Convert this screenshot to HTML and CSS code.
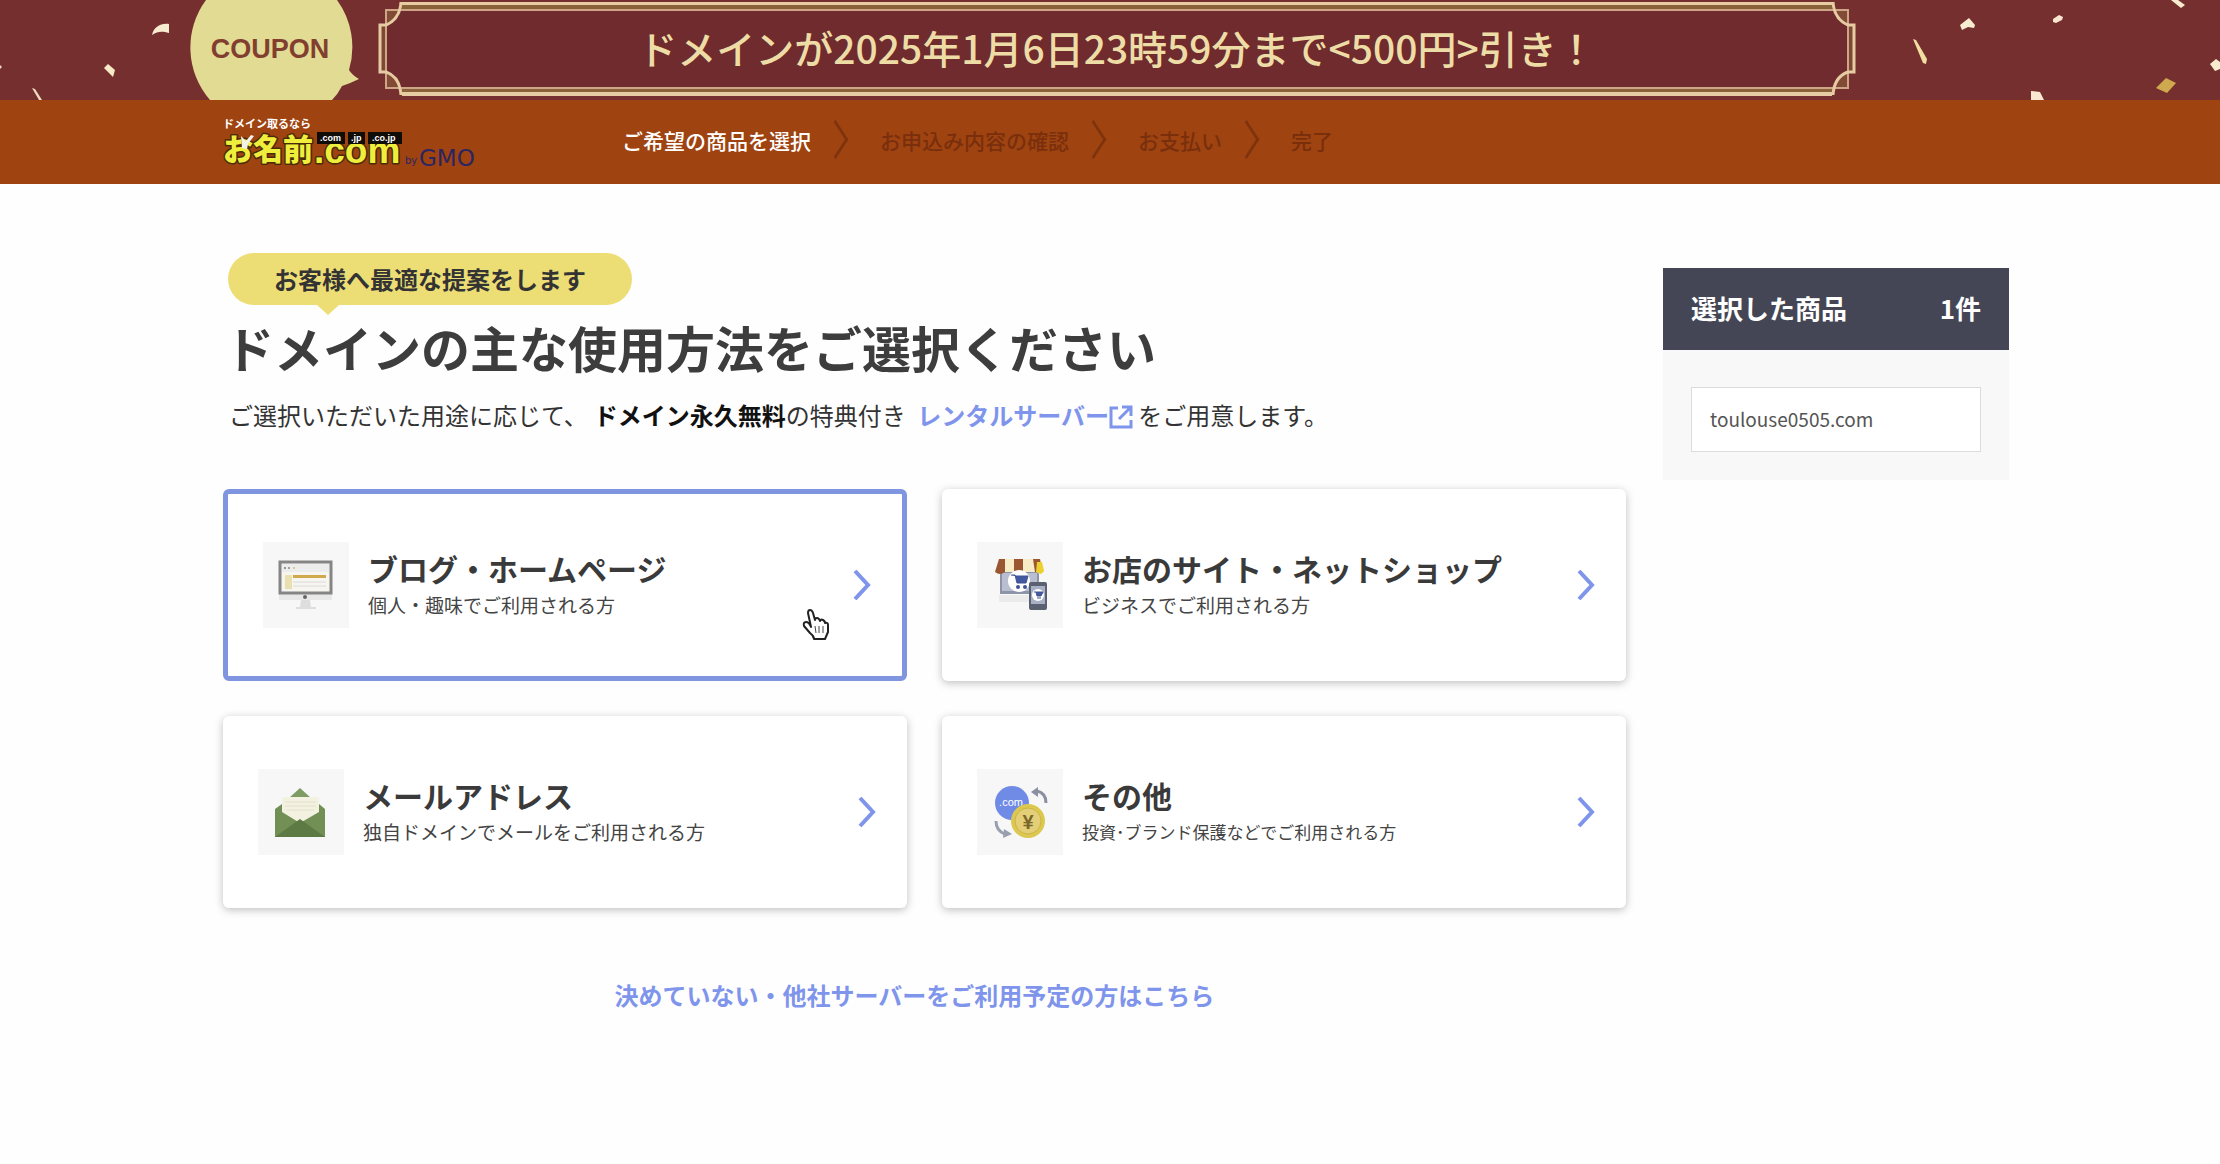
FILE: index.html
```html
<!DOCTYPE html>
<html lang="ja">
<head>
<meta charset="utf-8">
<meta name="viewport" content="width=device-width, initial-scale=1">
<title>お名前.com</title>
<link rel="stylesheet" href="styles.css">
</head>
<body>
<div class="banner">
  <svg class="confetti confetti-left" width="190" height="100" viewBox="0 0 190 100" aria-hidden="true">
    <path d="M152 35c2-8 8-12 17-11v9c-7-2-11-2-17 2z" fill="#f8ecd0"/>
    <path d="M104 68l4-4 7 6-2 7z" fill="#f6eac8"/>
    <path d="M32 88l3 1 7 11h-3z" fill="#efdcc0"/>
    <path d="M0 65l2 2-2 2z" fill="#efdcc0"/>
  </svg>
  <svg class="confetti confetti-right" width="330" height="100" viewBox="0 0 330 100" aria-hidden="true">
    <path d="M70 25l9-7 6 7-1 3-6-1-6 3z" fill="#f8ecd0"/>
    <path d="M163 19l6-4 4 2-1 3-6 3-3-1z" fill="#f8e6d0"/>
    <path d="M281 0h7l7 5-4 3z" fill="#f8ecd0"/>
    <path d="M23 39l3 1 11 19-1 5-3-1z" fill="#f0dfa0"/>
    <path d="M320 64l6-5 4 3v7l-5 2z" fill="#f8ecd0"/>
    <path d="M276 78l10 5-9 10-11-5z" fill="#cfa94e"/>
    <path d="M141 91l9 1 4 8h-13z" fill="#f8e8d2"/>
  </svg>
  <div class="coupon">
    <svg class="coupon-bubble" width="170" height="100" viewBox="0 0 170 100" aria-hidden="true">
      <path d="M16 0a80 80 0 0 0 4 100h122q6-6 10-14 9-3 17-7-7-4-10-9A80 80 0 0 0 147 0z" fill="#e2db94"/>
    </svg>
    <span class="coupon-text">COUPON</span>
  </div>
  <div class="frame">
    <svg width="24" height="100" viewBox="0 0 24 100" aria-hidden="true">
      <path d="M24 2q-2 17-16 22H1v49h7q14 4 16 22z" fill="#6f2b2d"/>
      <path d="M24 3v6H8v79h16v6q-2-17-16-21H2V24h6Q22 19 24 3z" fill="#8a623a" opacity=".55"/>
      <path d="M24 10H8v78h16" fill="none" stroke="#cfa587" stroke-width="2"/>
      <path d="M23 2q-1 17-15 23H2v47h6q14 5 15 23" fill="none" stroke="#e6cba3" stroke-width="3"/>
    </svg>
    <p class="frame-text">ドメインが2025年1月6日23時59分まで&lt;500円&gt;引き！</p>
    <svg width="24" height="100" viewBox="0 0 24 100" aria-hidden="true">
      <path d="M0 2q2 17 16 22h7v49h-7Q2 77 0 95z" fill="#6f2b2d"/>
      <path d="M0 3v6h16v79H0v6q2-17 16-21h6V24h-6Q2 19 0 3z" fill="#8a623a" opacity=".55"/>
      <path d="M0 10h16v78H0" fill="none" stroke="#cfa587" stroke-width="2"/>
      <path d="M1 2q1 17 15 23h6v47h-6Q2 77 1 95" fill="none" stroke="#e6cba3" stroke-width="3"/>
    </svg>
  </div>
</div>

<header class="header">
  <a class="logo" href="#" aria-label="お名前.com by GMO">
    <svg width="260" height="56" viewBox="0 0 260 56">
      <text x="1" y="14" class="logo-lead">ドメイン取るなら</text>
      <text x="1" y="46" class="logo-name">お名前</text>
      <text x="92" y="49" class="logo-dot">.com</text>
      <path d="M95 18h28v12H95zM126 18h17v12h-17zM146 18h34v12h-34z" fill="#100c08"/>
      <text x="98" y="27" class="logo-tag">.com</text>
      <text x="129" y="27" class="logo-tag">.jp</text>
      <text x="150" y="27" class="logo-tag">.co.jp</text>
      <path d="M19 22l5 5 5-6 3 1-6 8-1 5-5-1z" fill="#f2f2ea"/>
      <text x="183" y="50" class="logo-by">by</text>
      <text x="197" y="52" class="logo-gmo">GMO</text>
    </svg>
  </a>
  <ol class="steps">
    <li class="step step-current">ご希望の商品を選択</li>
    <li class="step">お申込み内容の確認</li>
    <li class="step">お支払い</li>
    <li class="step">完了</li>
  </ol>
</header>

<div class="page">
  <main class="main">
    <p class="badge">お客様へ最適な提案をします</p>
    <h1 class="title">ドメインの主な使用方法をご選択ください</h1>
    <p class="lead">ご選択いただいた用途に応じて、<strong>ドメイン永久無料</strong>の特典付き <a class="lead-link" href="#">レンタルサーバー<svg class="external" width="24" height="24" viewBox="0 0 24 24" aria-hidden="true"><path d="M9 3H2v19h20v-7M13 2h9v9M21 3L10 14" fill="none" stroke="#7f95ec" stroke-width="3"/></svg></a> をご用意します。</p>

    <div class="cards">
      <button class="card card-active" type="button">
        <svg class="card-icon" width="86" height="86" viewBox="0 0 86 86" aria-hidden="true">
          <path d="M16 50h53v8H16z" fill="#e8e8e8"/>
          <path d="M38 58h9l1 7h5v2H33v-2h4z" fill="#dedede"/>
          <rect x="17" y="20" width="51" height="31" fill="#f6f5f0" stroke="#858585" stroke-width="3"/>
          <path d="M19 22h47v8H19z" fill="#ececec"/>
          <circle cx="22" cy="26" r="1" fill="#777"/><circle cx="26" cy="26" r="1" fill="#888"/><circle cx="31" cy="26" r="1" fill="#d8c070"/>
          <path d="M22 33h7v14h-7z" fill="#eadfae"/>
          <path d="M30 33h33v3H30z" fill="#d0a94c"/>
          <path d="M30 40h33M30 44h33" stroke="#dadada"/>
          <circle cx="42" cy="55" r="2" fill="#666"/>
        </svg>
        <span class="card-body">
          <span class="card-title">ブログ・ホームページ</span>
          <span class="card-note">個人・趣味でご利用される方</span>
        </span>
        <svg class="chevron" width="18" height="30" viewBox="0 0 18 30" aria-hidden="true"><path d="M2 1l13 14L2 29"/></svg>
        <svg class="hand" width="28" height="32" viewBox="0 0 28 32" aria-hidden="true">
          <path d="M9 18L6 4q0-3 2-3t3 3l2 7q0-2 2-2t3 3q1-2 3-1t2 3q3-1 3 2v7l-3 7H12q0-3-4-6l-6-7q-1-4 2-4t5 5z" fill="#fff" stroke="#222" stroke-width="2" stroke-linejoin="round"/>
          <path d="M13 17l1 7M17 17v7M21 17v7" stroke="#444" stroke-width="1"/>
        </svg>
      </button>

      <button class="card" type="button">
        <svg class="card-icon" width="86" height="86" viewBox="0 0 86 86" aria-hidden="true">
          <path d="M22 53h30v7H22z" fill="#ebebeb"/>
          <path d="M23 29h39v23H23z" fill="#8d94a8"/>
          <path d="M25 31h35v18H25z" fill="#b9bfd0"/>
          <path d="M22 17h42l3 13q-4 3-7 0H18z" fill="#f8ecc6"/>
          <path d="M22 17h6v13q-5 4-10 0zM37 17h9v13q-5 4-9 0zM56 17h7l2 13h-7z" fill="#9a5630"/>
          <path d="M60 20h5l2 9-3 3-5-2z" fill="#ecd02c"/>
          <circle cx="42" cy="39" r="11" fill="#fff"/>
          <path d="M34 33h4l2 8h9l2-7H38" fill="#4459a0" stroke="#3f5396" stroke-width="1"/>
          <circle cx="41" cy="45" r="2" fill="#3f5396"/><circle cx="48" cy="45" r="2" fill="#3f5396"/>
          <rect x="52" y="40" width="18" height="28" rx="2" fill="#5b6070"/>
          <path d="M54 44h14v18H54z" fill="#a8b0c6"/>
          <circle cx="61" cy="53" r="6" fill="#fff"/>
          <path d="M57 50h2l1 4h4l2-4h-7M60 56h4" fill="#4459a0" stroke="#3f5396"/>
        </svg>
        <span class="card-body">
          <span class="card-title">お店のサイト・ネットショップ</span>
          <span class="card-note">ビジネスでご利用される方</span>
        </span>
        <svg class="chevron" width="18" height="30" viewBox="0 0 18 30" aria-hidden="true"><path d="M2 1l13 14L2 29"/></svg>
      </button>

      <button class="card" type="button">
        <svg class="card-icon" width="86" height="86" viewBox="0 0 86 86" aria-hidden="true">
          <path d="M42 19l11 10H31z" fill="#7f9c65"/>
          <path d="M17 40l7-5h37l6 5v28H17z" fill="#728f56"/>
          <path d="M24 30q0-2 3-2h31q3 0 3 2v13L42 54 24 43z" fill="#f3f1e0"/>
          <path d="M27 33h31M27 37h31M29 41h27" stroke="#e4e0cc"/>
          <path d="M17 68l25-18 25 18z" fill="#5d7a45"/>
        </svg>
        <span class="card-body">
          <span class="card-title">メールアドレス</span>
          <span class="card-note">独自ドメインでメールをご利用される方</span>
        </span>
        <svg class="chevron" width="18" height="30" viewBox="0 0 18 30" aria-hidden="true"><path d="M2 1l13 14L2 29"/></svg>
      </button>

      <button class="card" type="button">
        <svg class="card-icon" width="86" height="86" viewBox="0 0 86 86" aria-hidden="true">
          <circle cx="35" cy="34" r="17" fill="#708be6"/>
          <text x="34" y="37" class="icon-com">.com</text>
          <circle cx="51" cy="52" r="17" fill="#dcc84e"/>
          <circle cx="51" cy="52" r="13" fill="#e4cf78" stroke="#cdb548"/>
          <text x="51" y="60" class="icon-yen">¥</text>
          <path d="M69 34q0-10-9-12" fill="none" stroke="#8a90a0" stroke-width="3"/>
          <path d="M54 23l7-5v10z" fill="#8a90a0"/>
          <path d="M19 52q0 10 9 13" fill="none" stroke="#9a9fae" stroke-width="3"/>
          <path d="M35 65l-8-5-1 9z" fill="#9a9fae"/>
        </svg>
        <span class="card-body">
          <span class="card-title">その他</span>
          <span class="card-note card-note-small">投資･ブランド保護などでご利用される方</span>
        </span>
        <svg class="chevron" width="18" height="30" viewBox="0 0 18 30" aria-hidden="true"><path d="M2 1l13 14L2 29"/></svg>
      </button>
    </div>

    <p class="other"><a class="other-link" href="#">決めていない・他社サーバーをご利用予定の方はこちら</a></p>
  </main>

  <aside class="cart">
    <h2 class="cart-head"><span>選択した商品</span><span>1件</span></h2>
    <div class="cart-body">
      <p class="cart-item">toulouse0505.com</p>
    </div>
  </aside>
</div>
</body>
</html>
```

FILE: styles.css
```css
* {
  box-sizing: border-box;
}

body {
  margin: 0;
  background: #fefefe;
  color: #333;
  font-family: "Noto Sans CJK JP", sans-serif;
  font-size: 24px;
}

p,
h1,
h2,
ol {
  margin: 0;
  padding: 0;
}

a {
  color: #7f95ec;
  text-decoration: none;
}

svg {
  display: block;
  flex: none;
}

/* Coupon banner */
.banner {
  position: relative;
  display: flex;
  gap: 18px;
  height: 100px;
  padding: 0 364px 0 190px;
  background: #762f2f;
  overflow: hidden;
}

.confetti {
  position: absolute;
  top: 0;
}

.confetti-left {
  left: 0;
}

.confetti-right {
  right: 0;
}

.coupon {
  position: relative;
  flex: none;
  width: 170px;
}

.coupon-text {
  position: absolute;
  top: 34px;
  left: 0;
  width: 160px;
  color: #81402f;
  font: bold 27px/30px "Liberation Sans", sans-serif;
  text-align: center;
}

.frame {
  display: flex;
  flex: 1;
}

.frame-text {
  flex: 1;
  background: linear-gradient(#762f2f 2px, #e6cba3 2px 5px, #8a623a 5px 9px, #cfa587 9px 11px, #6f2b2d 11px 87px, #cfa587 87px 89px, #8a623a 89px 92px, #e6cba3 92px 96px, #762f2f 96px);
  color: #eedca6;
  font-size: 39px;
  font-weight: 500;
  line-height: 94px;
  text-align: center;
  white-space: nowrap;
}

/* Header */
.header {
  display: flex;
  align-items: center;
  gap: 140px;
  height: 84px;
  padding: 0 10%;
  background: #9f4311;
}

.logo-lead {
  fill: #fff;
  font-size: 11px;
  font-weight: bold;
}

.logo-name,
.logo-dot {
  fill: #f0ee3c;
  stroke: #4a2c08;
  stroke-width: 3px;
  stroke-linejoin: round;
  paint-order: stroke;
  font-size: 30px;
  font-weight: 900;
}

.logo-dot {
  font-family: "Liberation Sans", sans-serif;
  font-size: 37px;
}

.logo-tag {
  fill: #fff;
  font: bold 9px "Liberation Sans", sans-serif;
}

.logo-by,
.logo-gmo {
  fill: #2b2560;
  font: 10px "DejaVu Sans", sans-serif;
}

.logo-gmo {
  font-size: 23px;
}

.steps {
  display: flex;
  padding-bottom: 5px;
  list-style: none;
  font-size: 21px;
  line-height: 32px;
  white-space: nowrap;
}

.step {
  display: flex;
  align-items: center;
  color: #792f0c;
  font-weight: 500;
}

.step-current {
  color: #fff;
}

.step + .step::before {
  content: "";
  width: 20px;
  height: 20px;
  margin: 0 33px 0 13px;
  border: solid #7f330d;
  border-width: 3px 3px 0 0;
  transform: rotate(45deg) skew(12deg, 12deg);
}

/* Page columns */
.page {
  display: grid;
  grid-template-columns: minmax(0, 1fr) 346px;
  gap: 37px;
  align-items: start;
  padding: 69px 211px 48px 223px;
}

.badge {
  position: relative;
  width: max-content;
  margin-left: 5px;
  padding: 0 46px;
  border-radius: 26px;
  background: #eddd75;
  font-weight: bold;
  line-height: 52px;
}

.badge::after {
  content: "";
  position: absolute;
  top: 100%;
  left: 89px;
  border: solid transparent;
  border-width: 10px 11px 0;
  border-top-color: #eddd75;
}

.title {
  margin-top: 7px;
  padding-left: 2px;
  color: #3d3d3d;
  font-size: 49px;
  line-height: 70px;
}

.lead {
  margin: 15px 0 56px;
  padding-left: 6px;
  line-height: 36px;
}

.lead strong {
  margin-left: 6px;
  color: #111;
}

.lead-link {
  margin-left: 6px;
  font-weight: bold;
}

.external {
  display: inline-block;
  vertical-align: -4px;
}

/* Choices */
.cards {
  display: grid;
  grid-template-columns: 1fr 1fr;
  gap: 35px;
}

.card {
  position: relative;
  display: flex;
  align-items: center;
  gap: 19px;
  min-height: 192px;
  padding: 0 31px 0 35px;
  border: 0;
  border-radius: 6px;
  background: #fff;
  box-shadow: 0 2px 8px rgba(0, 0, 0, 0.25);
  color: #3a3a3a;
  font-family: inherit;
  text-align: left;
  cursor: pointer;
}

.card-active {
  border: 5px solid #8095e0;
  box-shadow: none;
}

.card-icon {
  background: #f7f7f7;
}

.card-body {
  flex: 1;
}

.card-title,
.card-note {
  display: block;
}

.card-title {
  font-size: 30px;
  font-weight: bold;
  line-height: 40px;
}

.card-note {
  color: #444;
  font-size: 19px;
  line-height: 34px;
}

.card-note-small {
  font-size: 17px;
}

.chevron {
  fill: none;
  stroke: #7f95ec;
  stroke-width: 4px;
}

.hand {
  position: absolute;
  right: 72px;
  bottom: 35px;
}

.icon-com {
  fill: #fff;
  font: 11px "Liberation Sans", sans-serif;
  text-anchor: middle;
}

.icon-yen {
  fill: #79662a;
  font: bold 20px "Liberation Sans", sans-serif;
  text-anchor: middle;
}

.other {
  margin-top: 69px;
  padding-right: 20px;
  line-height: 36px;
  text-align: center;
}

.other-link {
  font-weight: bold;
}

/* Selected products */
.cart {
  margin-top: 15px;
  background: #f8f8f8;
}

.cart-head {
  display: flex;
  justify-content: space-between;
  padding: 0 28px 2px;
  background: #444655;
  color: #fff;
  font-size: 26px;
  line-height: 80px;
}

.cart-body {
  padding: 37px 28px 28px;
}

.cart-item {
  padding: 0 18px 2px;
  border: 1px solid #dcdcdc;
  background: #fff;
  color: #555;
  font-size: 19px;
  line-height: 61px;
}
```
